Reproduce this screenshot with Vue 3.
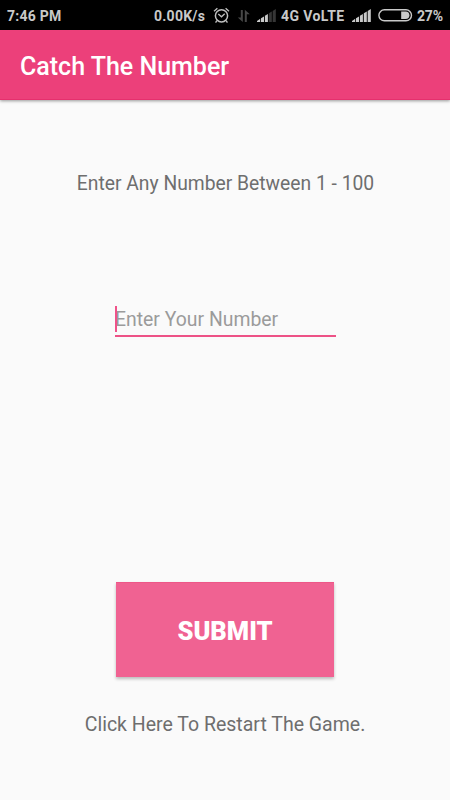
<script setup>
import { ref } from 'vue'

const title = 'Catch The Number'
const guess = ref('')
const bars = [
  'M0 13V12L3.2 9.8V13Z',
  'M4 13V9.2L7 7.4V13Z',
  'M7.9 13V6.8L10.9 5V13Z',
  'M11.8 13V4.3L14.8 2.5V13Z',
  'M15.7 13V1.9L18.8 0V13Z'
]
const restart = () => { guess.value = '' }
</script>

<template>
  <div class="screen">
    <header class="status">
      <span class="time">7:46 PM</span>
      <span class="speed">0.00K/s</span>
      <svg class="alarm" width="17" height="17" viewBox="0 0 17 17" fill="none" stroke="#c0c0c0">
        <circle cx="8.5" cy="8.8" r="6.1" stroke-width="1.5" />
        <path d="M1 4.2 4.4 1.2M16 4.2 12.6 1.2M3.8 13.6 2.6 15.6M13.2 13.6 14.4 15.6" stroke-width="1.3" />
        <path d="M5.3 7 8.5 9.8 11.7 6.8" stroke-width="1.3" />
      </svg>
      <svg class="data" width="14" height="14" viewBox="0 0 14 14" fill="#484848">
        <path d="M3.8 1H5.8V13L.8 8.6H3.8ZM7.8 .8 12.8 5.2H9.8V13H7.8Z" />
      </svg>
      <svg class="signal first" width="19" height="13" viewBox="0 0 19 13">
        <path v-for="(d, i) in bars" :key="i" :d="d" :fill="i < 3 ? '#c9c9c9' : '#363636'" />
      </svg>
      <span class="network">4G VoLTE</span>
      <svg class="signal second" width="19" height="13" viewBox="0 0 19 13" fill="#c9c9c9">
        <path v-for="(d, i) in bars" :key="i" :d="d" />
      </svg>
      <svg class="battery" width="35" height="13" viewBox="0 0 35 13">
        <rect x=".9" y=".8" width="32.6" height="11" rx="5.5" fill="none" stroke="#c9c9c9" stroke-width="1.4" />
        <path d="M23.2 2.5H27.6A3.8 3.8 0 0 1 27.6 10.1H23.2Z" fill="#c9c9c9" />
      </svg>
      <span class="percent">27%</span>
    </header>
    <div class="appbar"><h1>{{ title }}</h1></div>
    <main>
      <p class="prompt">Enter Any Number Between 1 - 100</p>
      <label class="field">
        <i class="caret"></i>
        <input v-model="guess" placeholder="Enter Your Number" inputmode="numeric" />
      </label>
      <button class="submit">SUBMIT</button>
      <a class="restart" @click="restart">Click Here To Restart The Game.</a>
    </main>
  </div>
</template>

<style>
body { margin: 0; background: #fafafa; }
</style>

<style scoped>
.screen {
  width: 450px;
  height: 800px;
  display: flex;
  flex-direction: column;
  overflow: hidden;
  background: #fafafa;
  font-family: Roboto, sans-serif;
}
.status {
  height: 30px;
  flex: none;
  box-sizing: border-box;
  display: flex;
  align-items: center;
  padding: 1px 0 0 7px;
  background: #000;
  color: #c9c9c9;
  font-size: 14px;
  font-weight: 700;
  letter-spacing: .25px;
  white-space: nowrap;
}
.status svg { flex: none; display: block; }
.time { width: 147px; }
.speed { width: 59px; }
.alarm { margin-top: -1px; }
.data { margin-left: 7px; }
.signal.first { margin: 0 5px 0 6px; }
.network { width: 71px; letter-spacing: .4px; }
.battery { margin: 0 4px 0 7px; }
.percent { letter-spacing: -.2px; }
.appbar {
  height: 70px;
  flex: none;
  display: flex;
  align-items: center;
  padding: 5px 20px 0;
  box-sizing: border-box;
  background: #ec407a;
  border-bottom: 1px solid #e5306d;
  box-shadow: 0 1px 3px rgba(0, 0, 0, .4);
}
h1 {
  margin: 0;
  color: #fff;
  font-size: 25px;
  line-height: 30px;
  font-weight: 500;
}
main {
  display: flex;
  flex-direction: column;
  align-items: center;
}
.prompt, .restart {
  color: #6e6e6e;
  line-height: 24px;
  white-space: nowrap;
}
.prompt { margin: 72px 0 0; padding-left: 1px; font-size: 19.3px; }
.field {
  display: flex;
  position: relative;
  width: 221px;
  height: 32px;
  box-sizing: border-box;
  margin-top: 109px;
  border-bottom: 2px solid #ed5286;
}
.caret {
  position: absolute;
  left: 0;
  top: 1px;
  width: 2px;
  height: 26px;
  background: #f0528a;
}
input {
  width: 100%;
  height: 29px;
  padding: 0 0 0 .5px;
  border: 0;
  outline: 0;
  background: transparent;
  font: 19.4px/29px Roboto, sans-serif;
  color: #333;
}
input::placeholder { color: #9b9b9b; opacity: 1; }
.submit {
  width: 218px;
  height: 95px;
  margin-top: 245px;
  padding: 1px 0 0;
  border: 0;
  border-top: 1px solid #ee5788;
  background: #f06292;
  box-shadow: 0 2px 3px rgba(0, 0, 0, .25);
  color: #fff;
  font: 900 25.5px/30px Roboto, sans-serif;
}
.restart { margin-top: 36px; font-size: 19.5px; cursor: pointer; }
</style>
